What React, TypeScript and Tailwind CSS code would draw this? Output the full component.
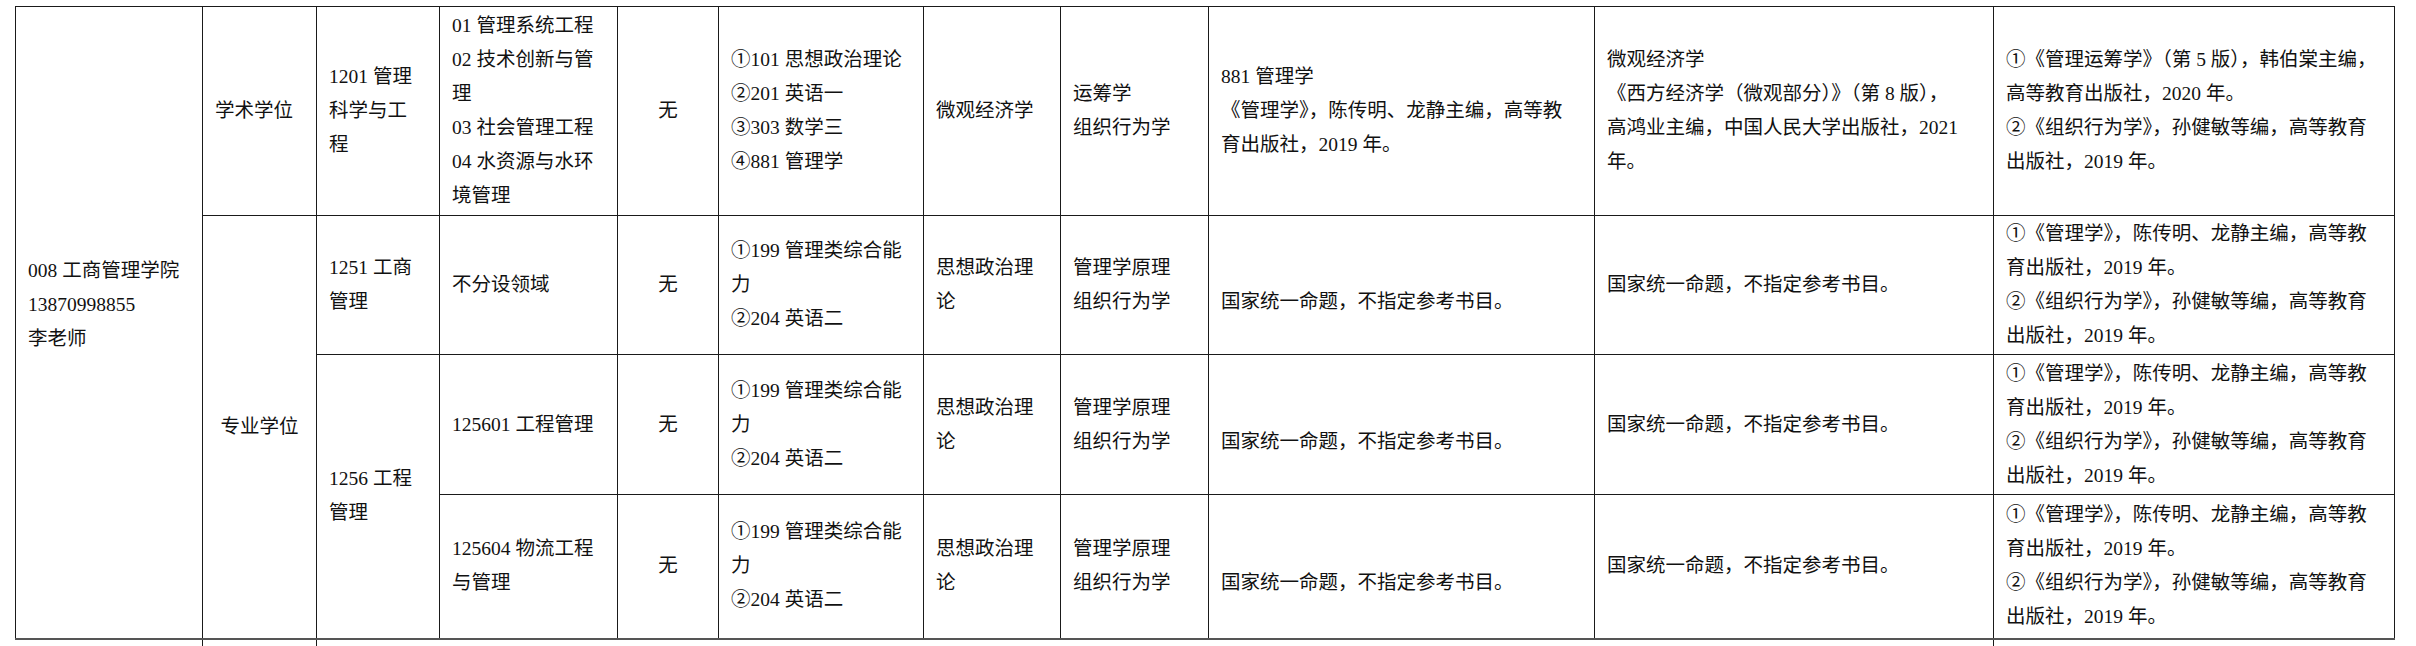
const FONT = {
  fontFamily: '"Liberation Serif", "Noto Sans CJK SC", serif',
};

const BOOKS_MGMT = [
  "①《管理学》，陈传明、龙静主编，高等教",
  "育出版社，2019 年。",
  "②《组织行为学》，孙健敏等编，高等教育",
  "出版社，2019 年。",
];

const EXAM_PRO = ["①199 管理类综合能", "力", "②204 英语二"];
const NONE_TEXT = "国家统一命题，不指定参考书目。";

function Lines({ lines }: { lines: string[] }) {
  return (
    <>
      {lines.map((line, i) => (
        <div key={i} className="whitespace-nowrap">
          {line === "" ? "\u00a0" : line}
        </div>
      ))}
    </>
  );
}

function Cell({
  lines,
  rowSpan,
  center,
  className = "",
}: {
  lines: string[];
  rowSpan?: number;
  center?: boolean;
  className?: string;
}) {
  return (
    <td
      rowSpan={rowSpan}
      className={`border border-[#1a1a1a] px-[12px] py-0 align-middle ${
        center ? "text-center" : "text-left"
      } ${className}`}
    >
      <Lines lines={lines} />
    </td>
  );
}

export default function App() {
  return (
    <div className="min-h-screen overflow-hidden bg-white" style={FONT}>
      <table className="ml-[15px] mt-[6px] w-[2379px] table-fixed border-collapse text-[19.5px] leading-[34px] text-[#111]">
        <colgroup>
          <col className="w-[187px]" />
          <col className="w-[114px]" />
          <col className="w-[123px]" />
          <col className="w-[178px]" />
          <col className="w-[101px]" />
          <col className="w-[205px]" />
          <col className="w-[137px]" />
          <col className="w-[148px]" />
          <col className="w-[386px]" />
          <col className="w-[399px]" />
          <col className="w-[401px]" />
        </colgroup>
        <tbody>
          <tr className="h-[209px]">
            <Cell
              rowSpan={4}
              lines={["008 工商管理学院", "13870998855", "李老师", ""]}
            />
            <Cell lines={["学术学位"]} />
            <Cell lines={["1201 管理", "科学与工", "程"]} />
            <Cell
              lines={[
                "01 管理系统工程",
                "02 技术创新与管",
                "理",
                "03 社会管理工程",
                "04 水资源与水环",
                "境管理",
              ]}
            />
            <Cell center lines={["无"]} />
            <Cell
              lines={[
                "①101 思想政治理论",
                "②201 英语一",
                "③303 数学三",
                "④881 管理学",
              ]}
            />
            <Cell lines={["微观经济学"]} />
            <Cell lines={["运筹学", "组织行为学"]} />
            <Cell
              lines={[
                "881 管理学",
                "《管理学》，陈传明、龙静主编，高等教",
                "育出版社，2019 年。",
              ]}
            />
            <Cell
              lines={[
                "微观经济学",
                "《西方经济学（微观部分）》（第 8 版），",
                "高鸿业主编，中国人民大学出版社，2021",
                "年。",
              ]}
            />
            <Cell
              lines={[
                "①《管理运筹学》（第 5 版），韩伯棠主编，",
                "高等教育出版社，2020 年。",
                "②《组织行为学》，孙健敏等编，高等教育",
                "出版社，2019 年。",
              ]}
            />
          </tr>

          <tr className="h-[139px]">
            <Cell rowSpan={3} center lines={["专业学位"]} />
            <Cell lines={["1251 工商", "管理"]} />
            <Cell lines={["不分设领域"]} />
            <Cell center lines={["无"]} />
            <Cell lines={EXAM_PRO} />
            <Cell lines={["思想政治理", "论"]} />
            <Cell lines={["管理学原理", "组织行为学"]} />
            <Cell lines={["", NONE_TEXT]} />
            <Cell lines={[NONE_TEXT]} />
            <Cell lines={BOOKS_MGMT} />
          </tr>

          <tr className="h-[140px]">
            <Cell rowSpan={2} lines={["1256 工程", "管理"]} />
            <Cell lines={["125601 工程管理"]} />
            <Cell center lines={["无"]} />
            <Cell lines={EXAM_PRO} />
            <Cell lines={["思想政治理", "论"]} />
            <Cell lines={["管理学原理", "组织行为学"]} />
            <Cell lines={["", NONE_TEXT]} />
            <Cell lines={[NONE_TEXT]} />
            <Cell lines={BOOKS_MGMT} />
          </tr>

          <tr className="h-[144px]">
            <Cell lines={["125604 物流工程", "与管理"]} />
            <Cell center lines={["无"]} />
            <Cell lines={EXAM_PRO} />
            <Cell lines={["思想政治理", "论"]} />
            <Cell lines={["管理学原理", "组织行为学"]} />
            <Cell lines={["", NONE_TEXT]} />
            <Cell lines={[NONE_TEXT]} />
            <Cell lines={BOOKS_MGMT} />
          </tr>

          {/* start of the next college block, cut off by the frame */}
          <tr className="h-[40px]">
            <td className="border-t-2 border-t-[#555]" />
            <td className="border-x border-t-2 border-x-[#1a1a1a] border-t-[#555]" />
            <td colSpan={8} className="border-t-2 border-t-[#555]" />
            <td className="border-l border-t-2 border-l-[#1a1a1a] border-t-[#555]" />
          </tr>
        </tbody>
      </table>
    </div>
  );
}
